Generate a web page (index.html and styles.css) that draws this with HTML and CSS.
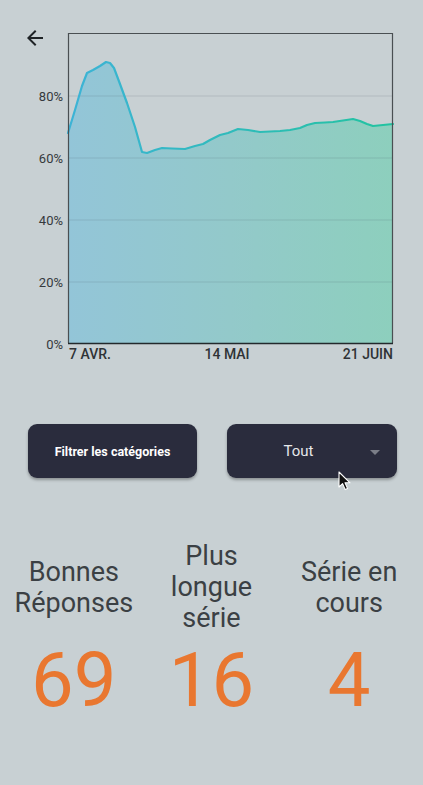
FILE: index.html
```html
<!DOCTYPE html>
<html lang="fr">
<head>
<meta charset="utf-8">
<title>Statistiques</title>
<link rel="stylesheet" href="styles.css">
</head>
<body>
<main class="page">
  <section class="chart">
    <button class="back" aria-label="Retour">
      <svg viewBox="0 0 24 24" width="24" height="24"><path d="M20 11H7.83l5.59-5.59L12 4l-8 8 8 8 1.41-1.41L7.83 13H20v-2z" fill="#1f2326"/></svg>
    </button>
    <svg class="plot" viewBox="0 0 423 370" width="423" height="370">
      <defs>
        <linearGradient id="fill" x1="0" y1="0" x2="1" y2="0">
          <stop offset="0" stop-color="#93c5d8"/>
          <stop offset="0.5" stop-color="#93c9ca"/>
          <stop offset="1" stop-color="#8dcfbd"/>
        </linearGradient>
        <linearGradient id="stroke" x1="68" y1="0" x2="393" y2="0" gradientUnits="userSpaceOnUse">
          <stop offset="0" stop-color="#3db3d6"/>
          <stop offset="1" stop-color="#22c3a0"/>
        </linearGradient>
      </defs>
      <path fill="url(#fill)" d="M68 133 L75 110 L82 86 L87 73 L93 70 L100 66 L106 62 L110 63 L114 68 L120 84 L127 103 L135 127 L142 152 L147 153 L155 150 L162 148 L172 148.5 L185 149 L195 146 L203 144 L210 140 L220 135 L228 133 L238 129 L248 130 L260 132 L270 131.5 L280 131 L290 130 L300 128 L307 125 L315 123 L325 122.5 L333 122 L343 120.5 L353 119 L360 121 L367 124 L373 126 L383 125 L393 124 L393 343 L68 343 Z"/>
      <g class="grid">
        <line x1="68" y1="96" x2="393" y2="96"/>
        <line x1="68" y1="158" x2="393" y2="158"/>
        <line x1="68" y1="220" x2="393" y2="220"/>
        <line x1="68" y1="282" x2="393" y2="282"/>
      </g>
      <polyline class="line" stroke="url(#stroke)" points="68,133 75,110 82,86 87,73 93,70 100,66 106,62 110,63 114,68 120,84 127,103 135,127 142,152 147,153 155,150 162,148 172,148.5 185,149 195,146 203,144 210,140 220,135 228,133 238,129 248,130 260,132 270,131.5 280,131 290,130 300,128 307,125 315,123 325,122.5 333,122 343,120.5 353,119 360,121 367,124 373,126 383,125 393,124"/>
      <path class="frame" d="M68.5 343 V33.5 H392.5 V343"/>
      <line class="axis" x1="68" y1="343.5" x2="393" y2="343.5"/>
      <g class="ylab">
        <text x="63" y="101">80%</text>
        <text x="63" y="163">60%</text>
        <text x="63" y="225">40%</text>
        <text x="63" y="287">20%</text>
        <text x="63" y="349">0%</text>
      </g>
      <g class="xlab">
        <text x="69" y="359" text-anchor="start">7 AVR.</text>
        <text x="227" y="359" text-anchor="middle">14 MAI</text>
        <text x="393" y="359" text-anchor="end">21 JUIN</text>
      </g>
    </svg>
  </section>

  <section class="controls">
    <button class="btn filter">Filtrer les catégories</button>
    <button class="btn select">
      <span class="select-text">Tout</span>
      <span class="caret"></span>
      <svg class="cursor" viewBox="0 0 14 21" width="14" height="21"><path d="M1 1 L1 16 L4.6 12.6 L7.2 18.6 L9.6 17.6 L7 11.8 L12 11.8 Z" fill="#111" stroke="#fff" stroke-width="1.1" stroke-linejoin="round"/></svg>
    </button>
  </section>

  <section class="stats">
    <div class="label">Bonnes<br>Réponses</div>
    <div class="label">Plus<br>longue<br>série</div>
    <div class="label">Série en<br>cours</div>
    <div class="value">69</div>
    <div class="value">16</div>
    <div class="value">4</div>
  </section>
</main>
</body>
</html>
```

FILE: styles.css
```css
html, body {
  margin: 0;
  padding: 0;
}
body {
  background: #c8d0d3;
  font-family: Roboto, "Liberation Sans", sans-serif;
  width: 423px;
  height: 785px;
  overflow: hidden;
}
.page {
  display: flex;
  flex-direction: column;
}
.chart {
  position: relative;
  height: 370px;
}
.plot {
  display: block;
}
.back {
  position: absolute;
  top: 26px;
  left: 23px;
  width: 24px;
  height: 24px;
  padding: 0;
  border: 0;
  background: none;
}
.back svg {
  display: block;
}
.grid line {
  stroke: rgba(60, 80, 90, 0.16);
  stroke-width: 1;
}
.line {
  fill: none;
  stroke-width: 2.2;
  stroke-linejoin: round;
  stroke-linecap: round;
}
.frame {
  fill: none;
  stroke: #4a4f52;
  stroke-width: 1.2;
}
.axis {
  stroke: #23292c;
  stroke-width: 1.5;
}
.ylab text {
  font-family: Roboto, "Liberation Sans", sans-serif;
  font-size: 13px;
  fill: #35393c;
  text-anchor: end;
}
.xlab text {
  font-family: Roboto, "Liberation Sans", sans-serif;
  font-size: 14px;
  font-weight: 500;
  fill: #2f3336;
}
.controls {
  display: flex;
  gap: 30px;
  padding: 54px 26px 0 28px;
}
.btn {
  position: relative;
  width: 169px;
  height: 54px;
  border: 0;
  border-radius: 9px;
  background: #2a2c3d;
  color: #fff;
  font-family: Roboto, "Liberation Sans", sans-serif;
  box-shadow: 0 2px 3px rgba(0, 0, 0, 0.3);
  padding: 0;
}
.filter {
  font-size: 12.5px;
  font-weight: 700;
}
.select {
  width: 170px;
  display: flex;
  align-items: center;
  padding-right: 17px;
}
.select-text {
  flex: 1;
  text-align: center;
  font-size: 15px;
  color: #e6e7ea;
}
.caret {
  width: 0;
  height: 0;
  border-left: 5px solid transparent;
  border-right: 5px solid transparent;
  border-top: 5px solid #7b7e88;
  margin-top: 2px;
}
.cursor {
  position: absolute;
  left: 111px;
  top: 47px;
}
.stats {
  display: grid;
  grid-template-columns: repeat(3, 1fr);
  align-items: center;
  padding: 63px 5px 0 5px;
}
.label {
  text-align: center;
  font-size: 27px;
  line-height: 31px;
  color: #3b4044;
}
.value {
  text-align: center;
  font-size: 76px;
  line-height: 76px;
  color: #e97730;
  margin-top: 8px;
}
```
